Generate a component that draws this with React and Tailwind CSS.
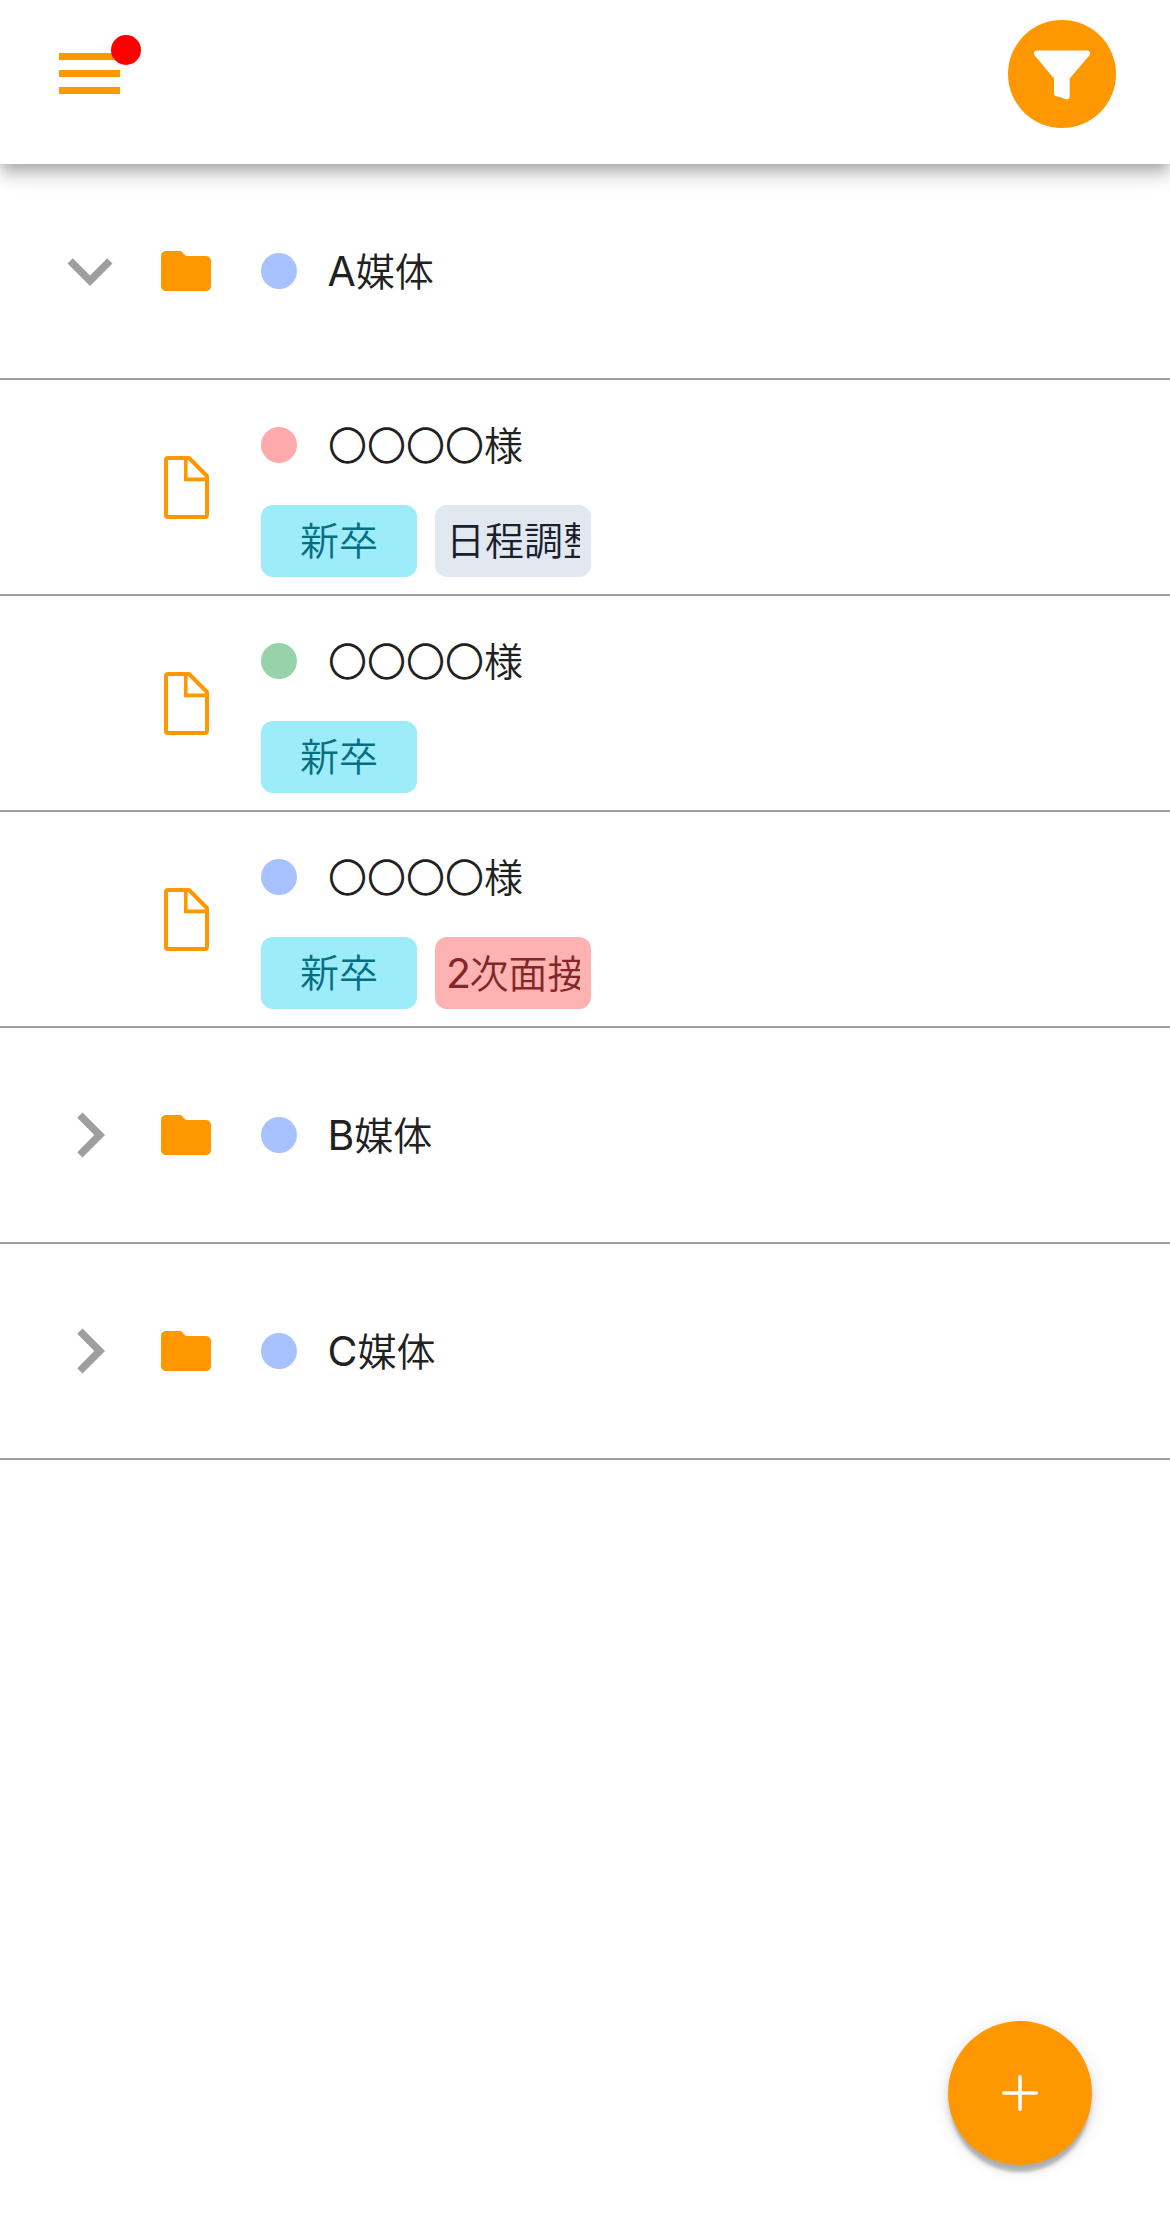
const FONT = "font-['Inter','Noto_Sans_CJK_JP',sans-serif]";

function ChevronIcon({ open }) {
  return (
    <svg viewBox="0 0 24 24" className="size-[90px] shrink-0 fill-[#9e9e9e]">
      <path d={open ? "M7.41 8.59 12 13.17l4.59-4.58L18 10l-6 6-6-6z" : "M10 6 8.59 7.41 13.17 12l-4.58 4.59L10 18l6-6z"} />
    </svg>
  );
}

function FolderIcon() {
  return (
    <svg viewBox="0 0 24 24" className="ml-[21px] size-[60px] shrink-0 fill-[#ff9800]">
      <path d="M10 4H4c-1.1 0-1.99.9-1.99 2L2 18c0 1.1.9 2 2 2h16c1.1 0 2-.9 2-2V8c0-1.1-.9-2-2-2h-8l-2-2z" />
    </svg>
  );
}

function FileIcon() {
  return (
    <svg viewBox="0 0 45 63" className="h-[63px] w-[45px] shrink-0 fill-none stroke-[#ff9800]">
      <path strokeWidth="4" strokeLinejoin="round" d="M25 2H4a2 2 0 0 0-2 2v55a2 2 0 0 0 2 2h37a2 2 0 0 0 2-2V20z" />
      <path strokeWidth="3.6" d="M21.8 2v21.4H43" />
    </svg>
  );
}

function Dot({ color }) {
  return <span className={`size-9 shrink-0 rounded-full ${color}`} />;
}

function Label({ latin, children }) {
  return (
    <span className="text-[39px] leading-[54px] font-[350] whitespace-nowrap text-[#212121]">
      {latin && <span className="text-[41px] font-normal">{latin}</span>}
      {children}
    </span>
  );
}

function Chip({ tone, center, latin, children }) {
  return (
    <div className={`flex h-[72px] w-[156px] rounded-xl px-[11px] ${tone}`}>
      <div className={`w-full overflow-hidden text-[39px] leading-[72px] font-[350] whitespace-nowrap ${center ? "text-center" : ""}`}>
        {latin && <span className="text-[41px] font-normal tracking-[-1.5px]">{latin}</span>}
        {children}
      </div>
    </div>
  );
}

function FolderRow({ open, latin, children }) {
  return (
    <div className="flex h-[216px] items-center border-b-2 border-[#9e9e9e] pl-[45px]">
      <ChevronIcon open={open} />
      <FolderIcon />
      <div className="ml-[45px] flex items-center gap-[30.5px]">
        <Dot color="bg-[#a8c1ff]" />
        <Label latin={latin}>{children}</Label>
      </div>
    </div>
  );
}

function PersonRow({ dot, children }) {
  return (
    <div className="flex h-[216px] items-center border-b-2 border-[#9e9e9e] pl-[164px]">
      <FileIcon />
      <div className="ml-[52px] flex h-full flex-col pt-[38px]">
        <div className="flex h-[54px] items-center gap-[31px]">
          <Dot color={dot} />
          <span className="pt-0.5">
            <Label>〇〇〇〇様</Label>
          </span>
        </div>
        <div className="mt-[33px] flex gap-[18px]">{children}</div>
      </div>
    </div>
  );
}

const CYAN = "bg-[#9decf9] text-[#086f83]";
const GRAY = "bg-[#e2e8f0] text-[#1a202c]";
const RED = "bg-[#feb2b2] text-[#822727]";

export default function App() {
  return (
    <div className={`relative h-[2238px] w-[1170px] overflow-hidden bg-white ${FONT}`}>
      <header className="relative z-10 flex h-[164px] items-start justify-between bg-white pt-5 pr-[54px] pl-[59px] shadow-[0_6px_12px_-3px_rgba(0,0,0,0.2),0_12px_15px_0_rgba(0,0,0,0.14),0_3px_30px_0_rgba(0,0,0,0.12)]">
        <button aria-label="メニュー" className="relative mt-[33px] flex w-[61px] flex-col gap-[10px]">
          <span className="h-[7px] bg-[#ff9800]" />
          <span className="h-[7px] bg-[#ff9800]" />
          <span className="h-[7px] bg-[#ff9800]" />
          <span className="absolute -top-[18px] left-[52px] size-[30px] rounded-full bg-[#ff0000]" />
        </button>
        <button aria-label="絞り込み" className="flex size-[108px] items-start justify-center rounded-full bg-[#ff9800] pt-[30px]">
          <svg viewBox="0 0 56 50" className="h-[50px] w-14 fill-white">
            <path d="M3 .4H53c3 0 4 3.200 2.300 5.200L35.700 28.600V46.500c0 2-1.600 3.300-3.500 2.700L22 46c-1.300-.4-2-1.300-2-2.600V28.600L.7 5.600C-1 3.600 0 .4 3 .4z" />
          </svg>
        </button>
      </header>

      <main>
        <FolderRow open latin="A">媒体</FolderRow>
        <PersonRow dot="bg-[#ffabab]">
          <Chip tone={CYAN} center>新卒</Chip>
          <Chip tone={GRAY}>日程調整</Chip>
        </PersonRow>
        <PersonRow dot="bg-[#97d2ab]">
          <Chip tone={CYAN} center>新卒</Chip>
        </PersonRow>
        <PersonRow dot="bg-[#a8c1ff]">
          <Chip tone={CYAN} center>新卒</Chip>
          <Chip tone={RED} latin="2">次面接</Chip>
        </PersonRow>
        <FolderRow latin="B">媒体</FolderRow>
        <FolderRow latin="C">媒体</FolderRow>
      </main>

      <button aria-label="追加" className="absolute right-[78px] bottom-[73px] flex size-36 items-center justify-center rounded-full bg-[#ff9800] shadow-[0_9px_3px_-2px_rgba(0,0,0,0.18),0_6px_6px_0_rgba(0,0,0,0.12),0_3px_18px_0_rgba(0,0,0,0.12)]">
        <svg viewBox="0 0 36 36" className="size-9 fill-none stroke-white">
          <path strokeWidth="3.6" strokeLinecap="round" d="M18 1.800v32.400M1.800 18h32.400" />
        </svg>
      </button>
    </div>
  );
}
